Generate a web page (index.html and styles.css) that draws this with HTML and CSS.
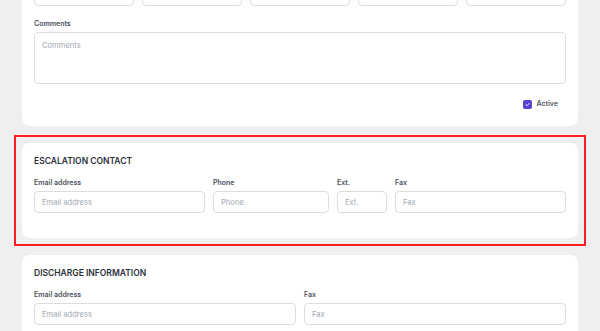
FILE: index.html
```html
<!DOCTYPE html>
<html lang="en">
<head>
<meta charset="utf-8">
<title>Contacts</title>
<link rel="stylesheet" href="styles.css">
</head>
<body>
<main class="page">
  <section class="card card-first">
    <div class="row cols-5">
      <div class="field"><input class="input" placeholder=""></div>
      <div class="field"><input class="input" placeholder=""></div>
      <div class="field"><input class="input" placeholder=""></div>
      <div class="field"><input class="input" placeholder=""></div>
      <div class="field"><input class="input" placeholder=""></div>
    </div>
    <div class="row row-comments">
      <div class="field">
        <label class="label">Comments</label>
        <textarea class="input textarea" placeholder="Comments"></textarea>
      </div>
    </div>
    <div class="active-row">
      <span class="checkbox"><svg viewBox="0 0 10 10" width="9" height="9"><path d="M3.3 5.3 L4.5 6.4 L6.8 3.8" fill="none" stroke="#fff" stroke-width="1.1" stroke-linecap="round" stroke-linejoin="round"/></svg></span>
      <span class="active-text">Active</span>
    </div>
  </section>

  <section class="card highlight">
    <h2 class="card-title">ESCALATION CONTACT</h2>
    <div class="row cols-esc">
      <div class="field"><label class="label">Email address</label><input class="input" placeholder="Email address"></div>
      <div class="field"><label class="label">Phone</label><input class="input" placeholder="Phone"></div>
      <div class="field"><label class="label">Ext.</label><input class="input" placeholder="Ext."></div>
      <div class="field"><label class="label">Fax</label><input class="input" placeholder="Fax"></div>
    </div>
  </section>

  <section class="card">
    <h2 class="card-title">DISCHARGE INFORMATION</h2>
    <div class="row cols-2">
      <div class="field"><label class="label">Email address</label><input class="input" placeholder="Email address"></div>
      <div class="field"><label class="label">Fax</label><input class="input" placeholder="Fax"></div>
    </div>
  </section>
</main>
</body>
</html>
```

FILE: styles.css
```css
* { box-sizing: border-box; }
html, body { margin: 0; padding: 0; }
body {
  background: #efefef;
  font-family: Inter, "Noto Sans", "Liberation Sans", sans-serif;
  overflow: hidden;
}
.page {
  display: flex;
  flex-direction: column;
  gap: 17px;
  padding: 0 22px;
  margin-top: -28px;
}
.card {
  position: relative;
  background: #fff;
  border-radius: 8px;
  padding: 12px;
}
.highlight::after {
  content: "";
  position: absolute;
  inset: -8px;
  border: 2px solid #ff1e1e;
  pointer-events: none;
}
.card-title {
  margin: 0 0 11px;
  font-size: 8.5px;
  line-height: 12px;
  font-weight: 600;
  color: #2b303a;
}
.row {
  display: grid;
  gap: 8px;
  margin-bottom: 13px;
}
.row-comments { margin-bottom: 14px; }
.cols-5 { grid-template-columns: repeat(5, 1fr); }
.cols-esc { grid-template-columns: 171fr 116fr 50fr 171fr; }
.cols-2 { grid-template-columns: 1fr 1fr; }
.field { display: flex; flex-direction: column; min-width: 0; }
.label {
  font-size: 7px;
  line-height: 10px;
  font-weight: 600;
  color: #4a5160;
  margin-bottom: 3px;
}
.input {
  display: block;
  width: 100%;
  height: 22px;
  border: 1px solid #dddddd;
  border-radius: 4px;
  padding: 0 7px;
  font-family: inherit;
  font-size: 7.6px;
  color: #333;
  background: #fff;
  outline: none;
}
.input::placeholder { color: #a1a9b4; }
.textarea {
  height: 52px;
  padding: 8px 7px;
  resize: none;
}
.active-row {
  display: flex;
  justify-content: flex-end;
  align-items: center;
  gap: 5px;
  height: 12px;
  margin: 0 8px 4px 0;
}
.checkbox {
  width: 9px;
  height: 9px;
  border-radius: 2px;
  background: #5b3fd1;
  display: flex;
}
.active-text {
  font-size: 7px;
  line-height: 12px;
  font-weight: 600;
  color: #555b66;
}
```
